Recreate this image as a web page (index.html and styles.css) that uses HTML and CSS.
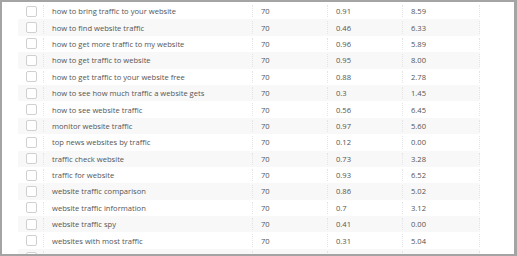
FILE: index.html
```html
<!DOCTYPE html>
<html>
<head>
<meta charset="utf-8">
<link rel="stylesheet" href="styles.css">
</head>
<body>
<div class="frame">
  <div class="table">
    <div class="row"><div class="cell chk"><span class="box"></span></div><div class="cell kw">how to bring traffic to your website</div><div class="cell">70</div><div class="cell">0.91</div><div class="cell last">8.59</div></div>
    <div class="row"><div class="cell chk"><span class="box"></span></div><div class="cell kw">how to find website traffic</div><div class="cell">70</div><div class="cell">0.46</div><div class="cell last">6.33</div></div>
    <div class="row"><div class="cell chk"><span class="box"></span></div><div class="cell kw">how to get more traffic to my website</div><div class="cell">70</div><div class="cell">0.96</div><div class="cell last">5.89</div></div>
    <div class="row"><div class="cell chk"><span class="box"></span></div><div class="cell kw">how to get traffic to website</div><div class="cell">70</div><div class="cell">0.95</div><div class="cell last">8.00</div></div>
    <div class="row"><div class="cell chk"><span class="box"></span></div><div class="cell kw">how to get traffic to your website free</div><div class="cell">70</div><div class="cell">0.88</div><div class="cell last">2.78</div></div>
    <div class="row"><div class="cell chk"><span class="box"></span></div><div class="cell kw">how to see how much traffic a website gets</div><div class="cell">70</div><div class="cell">0.3</div><div class="cell last">1.45</div></div>
    <div class="row"><div class="cell chk"><span class="box"></span></div><div class="cell kw">how to see website traffic</div><div class="cell">70</div><div class="cell">0.56</div><div class="cell last">6.45</div></div>
    <div class="row"><div class="cell chk"><span class="box"></span></div><div class="cell kw">monitor website traffic</div><div class="cell">70</div><div class="cell">0.97</div><div class="cell last">5.60</div></div>
    <div class="row"><div class="cell chk"><span class="box"></span></div><div class="cell kw">top news websites by traffic</div><div class="cell">70</div><div class="cell">0.12</div><div class="cell last">0.00</div></div>
    <div class="row"><div class="cell chk"><span class="box"></span></div><div class="cell kw">traffic check website</div><div class="cell">70</div><div class="cell">0.73</div><div class="cell last">3.28</div></div>
    <div class="row"><div class="cell chk"><span class="box"></span></div><div class="cell kw">traffic for website</div><div class="cell">70</div><div class="cell">0.93</div><div class="cell last">6.52</div></div>
    <div class="row"><div class="cell chk"><span class="box"></span></div><div class="cell kw">website traffic comparison</div><div class="cell">70</div><div class="cell">0.86</div><div class="cell last">5.02</div></div>
    <div class="row"><div class="cell chk"><span class="box"></span></div><div class="cell kw">website traffic information</div><div class="cell">70</div><div class="cell">0.7</div><div class="cell last">3.12</div></div>
    <div class="row"><div class="cell chk"><span class="box"></span></div><div class="cell kw">website traffic spy</div><div class="cell">70</div><div class="cell">0.41</div><div class="cell last">0.00</div></div>
    <div class="row"><div class="cell chk"><span class="box"></span></div><div class="cell kw">websites with most traffic</div><div class="cell">70</div><div class="cell">0.31</div><div class="cell last">5.04</div></div>
    <div class="row"><div class="cell chk"><span class="box"></span></div><div class="cell kw"></div><div class="cell"></div><div class="cell"></div><div class="cell last"></div></div>
  </div>
</div>
</body>
</html>
```

FILE: styles.css
```css
html, body {
  margin: 0;
  padding: 0;
  background: #fff;
}
.frame {
  box-sizing: border-box;
  width: 517px;
  height: 256px;
  border-style: solid;
  border-color: #a4a4a4;
  border-width: 2px 3px 2px 2px;
  overflow: hidden;
  padding: 1px 0 0 16px;
  font-family: "Open Sans", "Noto Sans", sans-serif;
  font-size: 7.6px;
  color: #555;
}
.table {
  width: 462px;
}
.row {
  display: grid;
  grid-template-columns: 25px 209px 75px 75px 78px;
  height: 16.4px;
  align-items: stretch;
}
.row:nth-child(even) {
  background: #f8f8f8;
}
.cell {
  display: flex;
  align-items: center;
  padding-left: 8px;
  border-left: 1px dotted #e4e4e4;
  white-space: nowrap;
  box-sizing: border-box;
  margin: 2px 0;
}
.cell.chk {
  border-left: none;
  padding-left: 8px;
}
.cell.last {
  border-right: 1px dotted #e4e4e4;
}
.box {
  display: block;
  width: 9px;
  height: 9px;
  border: 1px solid #d0d0d0;
  border-radius: 2px;
  background: #fff;
}
```
